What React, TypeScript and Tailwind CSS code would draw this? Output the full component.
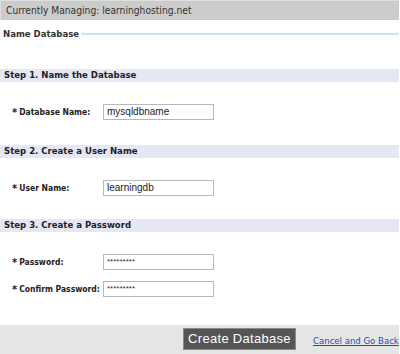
const FONT = { fontFamily: '"DejaVu Sans Condensed", Tahoma, "DejaVu Sans", sans-serif' };

const StepBar = ({ title, className }: { title: string; className: string }) => (
  <div
    className={`h-[13px] bg-[#e6e7f4] pl-[4px] flex items-center text-[9.5px] font-bold text-[#222] whitespace-nowrap ${className}`}
    style={FONT}
  >
    {title}
  </div>
);

const FieldRow = ({
  label,
  value,
  secret,
  className,
}: {
  label: string;
  value: string;
  secret?: boolean;
  className: string;
}) => (
  <div className={`h-[16px] flex items-center pl-[12px] ${className}`}>
    <div
      className="w-[91px] flex items-center text-[8.5px] font-bold text-[#222] whitespace-nowrap leading-none"
      style={FONT}
    >
      <span className="text-[11px] mr-[2px] leading-none">*</span>
      {label}
    </div>
    <div className="w-[111px] h-[16px] border border-[#b8b8b8] bg-white flex items-center pl-[3px]">
      <span
        className={secret ? "text-[8px] text-[#333] leading-none" : "text-[10px] text-[#222] leading-none"}
        style={{ fontFamily: '"Liberation Sans", Arial, sans-serif' }}
      >
        {value}
      </span>
    </div>
  </div>
);

export default function App() {
  return (
    <div className="w-[400px] h-[354px] bg-white flex flex-col overflow-hidden">
      <div
        className="w-[399px] h-[20px] shrink-0 bg-[#cccccc] border-t border-l border-[#dedede] pl-[5px] flex items-center text-[10.2px] text-[#333] whitespace-nowrap"
        style={FONT}
      >
        Currently Managing: learninghosting.net
      </div>

      <div className="w-[399px] mt-[7px] h-[14px] flex items-center pl-[3px]">
        <span className="text-[9.5px] font-bold text-[#333] whitespace-nowrap" style={FONT}>
          Name Database
        </span>
        <div className="flex-1 h-[2px] bg-[#cfe2f3] ml-[2px]" />
      </div>

      <StepBar title="Step 1. Name the Database" className="w-[399px] mt-[28px]" />
      <FieldRow label="Database Name:" value="mysqldbname" className="mt-[22px]" />

      <StepBar title="Step 2. Create a User Name" className="w-[399px] mt-[25px]" />
      <FieldRow label="User Name:" value="learningdb" className="mt-[22px]" />

      <StepBar title="Step 3. Create a Password" className="w-[399px] mt-[23px]" />
      <FieldRow label="Password:" value="*********" secret className="mt-[22px]" />
      <FieldRow label="Confirm Password:" value="*********" secret className="mt-[11px]" />

      <div className="w-[399px] mt-[28px] flex-1 bg-[#e5e5e5] flex items-start pt-[3px] pl-[183px]">
        <button
          className="w-[113px] h-[22px] shrink-0 bg-[#555555] border border-[#8a8a8a] text-white text-[13px] flex items-center justify-center tracking-[0.3px] whitespace-nowrap"
          style={{ fontFamily: '"Liberation Sans", Arial, sans-serif' }}
        >
          Create Database
        </button>
        <a
          href="#"
          className="ml-[17px] mt-[6px] text-[9.5px] text-[#1a4fb4] underline whitespace-nowrap"
          style={FONT}
        >
          Cancel and Go Back
        </a>
      </div>
    </div>
  );
}
